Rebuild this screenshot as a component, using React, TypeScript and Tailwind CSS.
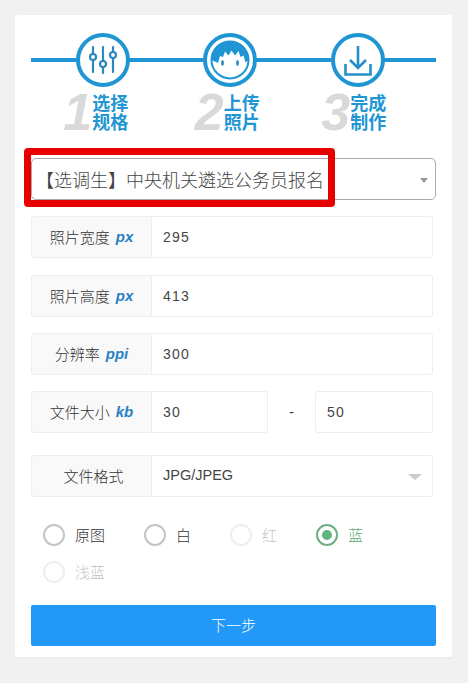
const cjk = "font-['Noto_Sans_CJK_SC',sans-serif]"

function SlidersIcon() {
  return (
    <svg viewBox="0 0 54 54" className="h-full w-full" fill="none" stroke="#2a87c0" strokeWidth="2.2" strokeLinecap="round">
      <path d="M17 14v7M17 27v12M27 14v14M27 34v6M37 14v5M37 25v14" />
      <circle cx="17" cy="24" r="3" />
      <circle cx="27" cy="31" r="3" />
      <circle cx="37" cy="22" r="3" />
    </svg>
  )
}

function FaceIcon() {
  return (
    <svg viewBox="0 0 54 54" className="h-full w-full">
      <circle cx="27" cy="27" r="18.5" fill="#fff" stroke="#1f96d3" strokeWidth="2" />
      <path d="M8.500 27C8.500 15 17 8 27 8s18.500 7 18.500 19l-3 2.500-2-7-3 1.500-2-6-3.500 4.500-3.500-5-3 5-3.500-4-2 5.500-3-1-2 7z" fill="#1f96d3" />
      <ellipse cx="19.500" cy="30" rx="1.400" ry="3" fill="#2a87c0" />
      <ellipse cx="34.500" cy="30" rx="1.400" ry="3" fill="#2a87c0" />
    </svg>
  )
}

function DownloadIcon() {
  return (
    <svg viewBox="0 0 54 54" className="h-full w-full" fill="none" stroke="#2490c9" strokeWidth="2.6">
      <path d="M27 13v22M19 27l8 8 8-8" />
      <path d="M14.500 31v10.500h25V31" />
    </svg>
  )
}

const steps = [
  { n: '1', a: '选择', b: '规格', icon: <SlidersIcon />, offset: '-ml-[14px]' },
  { n: '2', a: '上传', b: '照片', icon: <FaceIcon />, offset: '-ml-[6px]' },
  { n: '3', a: '完成', b: '制作', icon: <DownloadIcon />, offset: '-ml-[8px]' },
]

function Field({ label, unit, children }: { label: string; unit?: string; children: React.ReactNode }) {
  return (
    <div className="flex h-[42px] w-[402px]">
      <div className={`flex w-[121px] shrink-0 items-center justify-center gap-[6px] rounded-l-[3px] border border-[#eeeeee] bg-[#f9f9f9] text-[15px] font-light text-[#333] ${unit ? '' : 'pl-[4px]'}`}>
        <span>{label}</span>
        {unit && <i className="font-['Liberation_Sans',sans-serif] text-[15px] font-bold text-[#2a80c4]">{unit}</i>}
      </div>
      {children}
    </div>
  )
}

function Value({ children }: { children: React.ReactNode }) {
  return (
    <div className="flex h-full flex-1 items-center rounded-r-[3px] border border-l-0 border-[#eeeeee] bg-white pl-[11px] font-['Liberation_Sans',sans-serif] text-[14px] tracking-[1.2px] text-[#444]">
      {children}
    </div>
  )
}

const radios = [
  { label: '原图', state: 'on' },
  { label: '白', state: 'on' },
  { label: '红', state: 'off' },
  { label: '蓝', state: 'checked' },
  { label: '浅蓝', state: 'off' },
]

function Radio({ label, state }: { label: string; state: string }) {
  return (
    <div className="flex h-[22px] items-center gap-[10px] text-[15px] font-light">
      {state === 'checked' ? (
        <span className="flex h-[22px] w-[22px] items-center justify-center rounded-full border-2 border-[#6fae85]">
          <span className="h-[10px] w-[10px] rounded-full bg-[#5fb57f]" />
        </span>
      ) : (
        <span className={state === 'off' ? 'h-[22px] w-[22px] rounded-full border-2 border-[#eeeeee]' : 'h-[22px] w-[22px] rounded-full border-2 border-[#c4c4c4]'} />
      )}
      <span className={state === 'checked' ? 'text-[#5fa67a]' : state === 'off' ? 'text-[#c4c4c4]' : 'text-[#333]'}>{label}</span>
    </div>
  )
}

export default function App() {
  return (
    <div className={`min-h-[683px] bg-[#f1f1f1] p-[15px] ${cjk}`}>
      <div className="h-[642px] w-[437px] rounded-[2px] bg-white px-[16px] pt-[18px] shadow-[0_1px_2px_rgba(0,0,0,0.04)]">
        {/* Steps */}
        <div className="relative flex h-[107px] pl-[8px]">
          <div className="absolute left-0 top-[25px] h-[4px] w-[405px] bg-[#1f96d3]" />
          {steps.map((s) => (
            <div key={s.n} className="relative flex w-[127.5px] flex-col items-center">
              <div className="h-[54px] w-[54px] rounded-full border-[4px] border-[#1f96d3] bg-white">
                <div className="-m-[4px] h-[54px] w-[54px]">{s.icon}</div>
              </div>
              <div className={`${s.offset} mt-[3px] flex items-center`}>
                <i className="font-['Liberation_Sans',sans-serif] text-[52px] font-bold leading-[44px] text-[#d9d9d9]">{s.n}</i>
                <div className="text-[18px] font-bold leading-[19px] text-[#2196d3]">
                  {s.a}
                  <br />
                  {s.b}
                </div>
              </div>
            </div>
          ))}
        </div>

        {/* Spec select with red highlight */}
        <div className="relative mt-[18px] flex h-[42px] w-[405px] items-center rounded-[5px] border border-[#aaaaaa] bg-white pl-[4px] text-[18px] font-light text-[#444]">
          <span className="whitespace-nowrap">【选调生】中央机关遴选公务员报名</span>
          <span className="absolute right-[7px] top-[19px] h-0 w-0 border-x-[4px] border-t-[5px] border-x-transparent border-t-[#999]" />
          <div className="absolute -left-[8px] -top-[11px] h-[59px] w-[311px] rounded-[4px] border-[7px] border-[#e60000]" />
        </div>

        {/* Fields */}
        <div className="mt-[16px] flex flex-col">
          <Field label="照片宽度" unit="px">
            <Value>295</Value>
          </Field>
          <div className="mt-[17px]">
            <Field label="照片高度" unit="px">
              <Value>413</Value>
            </Field>
          </div>
          <div className="mt-[16px]">
            <Field label="分辨率" unit="ppi">
              <Value>300</Value>
            </Field>
          </div>
          <div className="mt-[16px]">
            <Field label="文件大小" unit="kb">
              <div className="flex h-full flex-1 items-center">
                <div className="h-full w-[116px]">
                  <Value>30</Value>
                </div>
                <span className="w-[47px] text-center font-['Liberation_Sans',sans-serif] text-[14px] text-[#333]">-</span>
                <div className="flex h-full w-[118px] items-center rounded-[3px] border border-[#eeeeee] pl-[11px] font-['Liberation_Sans',sans-serif] text-[14px] tracking-[1.2px] text-[#444]">50</div>
              </div>
            </Field>
          </div>
          <div className="mt-[22px]">
            <Field label="文件格式">
              <div className="relative flex h-full flex-1 items-center rounded-r-[3px] border border-l-0 border-[#eeeeee] pl-[11px] font-['Liberation_Sans',sans-serif] text-[14.500px] text-[#444]">
                JPG/JPEG
                <span className="absolute right-[10px] top-[18px] h-0 w-0 border-x-[7px] border-t-[6px] border-x-transparent border-t-[#cccccc]" />
              </div>
            </Field>
          </div>
        </div>

        {/* Background colour radios */}
        <div className="mt-[27px] flex w-[405px] flex-wrap gap-x-[39px] gap-y-[15px] pl-[12px]">
          {radios.map((r) => (
            <Radio key={r.label} label={r.label} state={r.state} />
          ))}
        </div>

        <button className={`mt-[22px] h-[41px] w-[405px] rounded-[2px] bg-[#2299f8] text-[15px] font-light text-white ${cjk}`}>下一步</button>
      </div>
    </div>
  )
}
